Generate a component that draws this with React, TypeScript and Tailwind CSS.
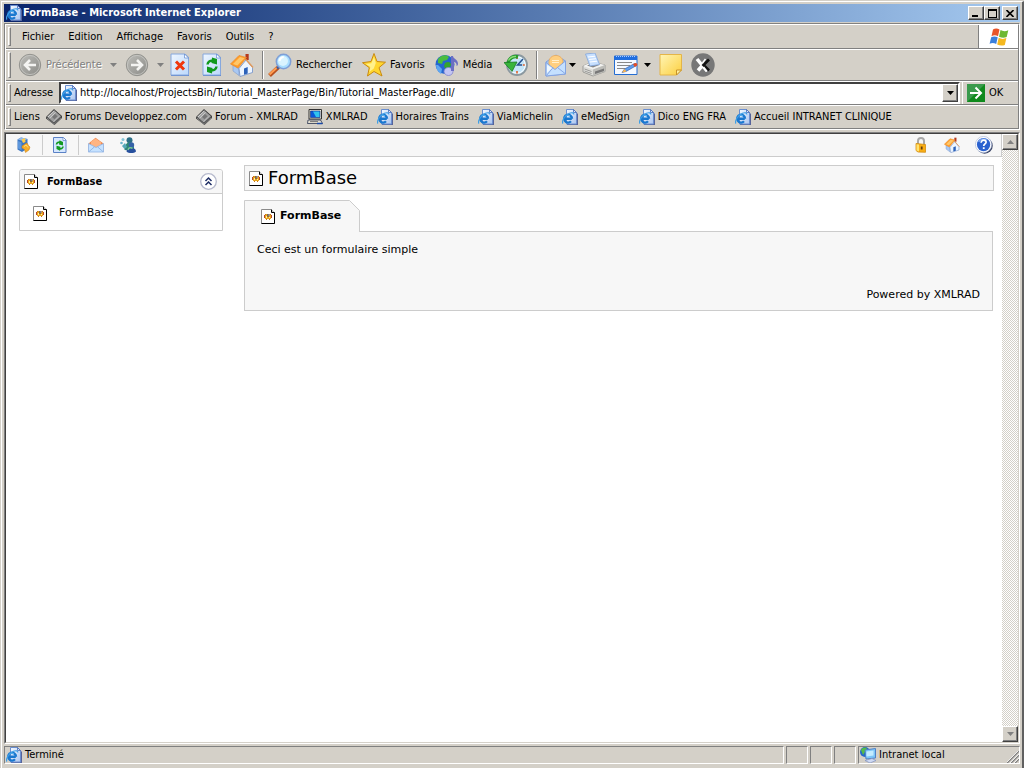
import type { ReactNode } from 'react';

type IconProps = { className?: string };

/* ---------- Icons ---------- */

function IePage({ className = 'size-4' }: IconProps) {
  return (
    <svg viewBox="0 0 16 16" className={className} aria-hidden="true">
      <defs>
        <linearGradient id="iePage" x1="0" y1="0" x2="1" y2="1">
          <stop offset="0" stopColor="#f4f9ff" />
          <stop offset="1" stopColor="#a9c4f0" />
        </linearGradient>
      </defs>
      <path d="M5 2h8l3 3v11H5z" fill="#56639a" />
      <path d="M4.500 .5h7l3 3v11.500h-10z" fill="url(#iePage)" stroke="#6b8fd0" />
      <path d="M11.500 .5v3h3z" fill="#dbe9ff" stroke="#4468b5" strokeWidth=".8" />
      <path d="M9.800 9.800H3.200M10 9.800a3.900 3.900 0 1 0-1 2.500" fill="none" stroke="#1a78cf" strokeWidth="2.400" />
      <path d="M3.500 7.500C4.500 6 6.500 6 8 7" fill="none" stroke="#6cc2f8" strokeWidth=".9" />
      <path d="M1 14.500C-.8 12.500 3 6 7.500 4.200c2.500-.9 4.500-.4 4.300 1.300" fill="none" stroke="#3e9fe6" strokeWidth="1.200" />
    </svg>
  );
}

function Diamond({ className = 'size-4' }: IconProps) {
  return (
    <svg viewBox="0 0 16 16" className={className} aria-hidden="true">
      <path d="M0 8 8 0l8 7v2l-7.500 7L0 9.500z" fill="#3c3c3c" />
      <path d="M1 7.800 8 1.200l7 6L8 13.700z" fill="#9b9b9b" />
      <path d="m2 8 6.300-6M3.500 9.300l6-6" stroke="#d9d9d9" strokeWidth=".9" />
      <path d="m.8 8.800 7.200 6.500 7.200-6.700" fill="none" stroke="#8a8a8a" />
      <path d="m6 8 3-3 2.500 2.300-3 3z" fill="#777" />
      <path d="M7.500 12.500l6-5.500" stroke="#c2c2c2" strokeWidth=".8" />
    </svg>
  );
}

function Computer({ className = 'size-4' }: IconProps) {
  return (
    <svg viewBox="0 0 16 16" className={className} aria-hidden="true">
      <path d="M2 .5h12.500v9.500H2z" fill="#ece9d8" stroke="#333" />
      <path d="M3.500 2h9.500v6.500H3.500z" fill="#0a57d8" stroke="#17317d" strokeWidth=".6" />
      <path d="M6 2.500h6.500V8H9z" fill="#31c3ee" />
      <path d="M1 11h12.500l2 3.500H.5z" fill="#e4e0d2" stroke="#28334f" strokeWidth=".8" />
      <path d="M3 12.600h8" stroke="#777" />
      <path d="M10 14.500h5.500" stroke="#1749ad" strokeWidth="1.500" />
    </svg>
  );
}

function RoundArrow({ back }: { back?: boolean }) {
  return (
    <svg viewBox="0 0 24 24" className="size-6" aria-hidden="true">
      <defs>
        <linearGradient id="round" x1="0" y1="0" x2="1" y2="1">
          <stop offset="0" stopColor="#bdbdb9" />
          <stop offset="1" stopColor="#8b8b87" />
        </linearGradient>
      </defs>
      <circle cx="12" cy="12" r="10.700" fill="url(#round)" stroke="#8e8e8a" strokeWidth=".9" />
      <circle cx="12" cy="12" r="9.600" fill="none" stroke="#c9c9c5" strokeWidth=".8" />
      <path
        d={back ? 'M18 12H7.500M12 7l-5 5 5 5' : 'M6 12h10.500M12 7l5 5-5 5'}
        fill="none"
        stroke="#f4f4f2"
        strokeWidth="2.600"
      />
    </svg>
  );
}

function Sheet({ children }: { children: ReactNode }) {
  return (
    <svg viewBox="0 0 20 24" className="h-6 w-5" aria-hidden="true">
      <defs>
        <linearGradient id="sheet" x1="0" y1="0" x2="1" y2="1">
          <stop offset="0" stopColor="#eef6ff" />
          <stop offset="1" stopColor="#bcd8fb" />
        </linearGradient>
      </defs>
      <path d="M1 1h14.500L19 4.500V23H1z" fill="#5f83c6" />
      <path d="M1 1h14l3.500 3.500V22H1z" fill="url(#sheet)" stroke="#86a8de" />
      <path d="M14.500 1v4h4z" fill="#fff" stroke="#6089cf" strokeWidth=".7" />
      {children}
    </svg>
  );
}

function StopIcon() {
  return (
    <Sheet>
      <path d="m6 8.500 8 8M14 8.500l-8 8" stroke="#f0370f" strokeWidth="3" />
    </Sheet>
  );
}

function RefreshIcon() {
  return (
    <Sheet>
      <path d="M5.500 11.500c.3-3 3-4.500 6-3.500" fill="none" stroke="#119a1d" strokeWidth="2.500" />
      <path d="M10 4.500 15 6v5.500L9.500 10z" fill="#119a1d" />
      <path d="M14.500 13.500c-.3 3-3 4.500-6 3.500" fill="none" stroke="#119a1d" strokeWidth="2.500" />
      <path d="M10 20.500 5 19v-5.500l5.500 1.500z" fill="#119a1d" />
    </Sheet>
  );
}

function HomeIcon({ className = 'size-6' }: IconProps) {
  return (
    <svg viewBox="0 0 24 24" className={className} aria-hidden="true">
      <path d="M15.500 1h3.200v6h-3.200z" fill="#b5391d" />
      <path d="M3 11.500 9 16v6.500L3 18z" fill="#a9c8f2" stroke="#7f9bc9" strokeWidth=".6" />
      <path d="M9 15.500 16 7l6.500 7.500v5L10 23.500z" fill="#edf5ff" stroke="#6f8fc8" strokeWidth=".8" />
      <path d="M14 15.500 17.700 14v6.600L14 21.800z" fill="#2c62b9" />
      <path d="M.5 11 9 2.500l7.500 2L8 15z" fill="#ff9d2a" stroke="#e8882a" strokeWidth=".7" />
      <path d="m3 11 7-7 4.500 1.200-7.200 7.300z" fill="#ffc76a" />
      <path d="m16 6.500 7 8" fill="none" stroke="#e39a5a" strokeWidth="1.300" />
    </svg>
  );
}

function SearchIcon() {
  return (
    <svg viewBox="0 0 24 24" className="size-6" aria-hidden="true">
      <path d="m1.500 22.500 9-8.500" stroke="#b7501e" strokeWidth="4" />
      <path d="m1.500 21.500 8-7.500" stroke="#ff9c50" strokeWidth="2.200" />
      <path d="m9 15.500 3-3" stroke="#425a9b" strokeWidth="2.500" />
      <circle cx="15.500" cy="8.500" r="7.200" fill="#a8deff" stroke="#7f9fd6" strokeWidth="1.500" />
      <circle cx="15" cy="8" r="5" fill="#d9f4ff" />
      <path d="M11.500 8c.4-2.500 2-3.800 4.200-4" fill="none" stroke="#fff" strokeWidth="2" />
    </svg>
  );
}

function StarIcon() {
  return (
    <svg viewBox="0 0 24 24" className="size-6" aria-hidden="true">
      <path d="m12 .5 3 8 8.500.7-6.500 5.500 3 8.300-8-4.500L5.500 23l1.800-8.300L.5 9.700 9 8.500z" fill="#ffd62e" stroke="#c98a12" />
      <path d="m12 4 1.800 6-2 5.500-4.500 3.500 1-5-4.500-3 5.500-.8z" fill="#fff18b" />
    </svg>
  );
}

function MediaIcon() {
  return (
    <svg viewBox="0 0 24 24" className="size-6" aria-hidden="true">
      <circle cx="10" cy="11.500" r="9.500" fill="#2466cf" />
      <path d="M3 6c3-4 8-5 11-2l-2 3-4 1-1 3-4-1z" fill="#4bbd3e" />
      <path d="M10 10c3-2 6-1 6 2l-2 4-3 1-2-4z" fill="#35a42d" />
      <path d="M1 12c0 4 2 7 5 9l1-5-4-4z" fill="#5ea6f1" />
      <ellipse cx="13.500" cy="18.500" rx="4.500" ry="4" fill="#c3c5f2" stroke="#8084cd" strokeWidth=".8" />
      <path d="M16 3h2c0 3 5 3 5 8 0 1-1 2-1.500 2 .5-3-1.500-4-2.500-4v9h-3z" fill="#6b6fc4" />
    </svg>
  );
}

function HistoryIcon() {
  return (
    <svg viewBox="0 0 24 24" className="size-6" aria-hidden="true">
      <circle cx="13" cy="12" r="10" fill="#c5e6f9" stroke="#8b989f" strokeWidth="1.800" />
      <circle cx="13" cy="12" r="8.300" fill="none" stroke="#fff" />
      <path d="M13 4v2M13 18v2.500M20.800 12h-2" stroke="#e0602a" strokeWidth="1.600" />
      <path d="m19 6-5.500 6H18" fill="none" stroke="#27508f" strokeWidth="1.500" />
      <path d="M4 10c1-5 6-7.500 10-6" fill="none" stroke="#259b2d" strokeWidth="3.500" />
      <path d="M0 9.500 13 9 8 18.500z" fill="#38b43b" stroke="#187a24" strokeWidth=".8" />
      <path d="M4.500 7.500C6 4.700 9 3.300 12 3.500" fill="none" stroke="#8add78" strokeWidth="1.300" />
    </svg>
  );
}

function MailIcon() {
  return (
    <svg viewBox="0 0 24 24" className="size-6" aria-hidden="true">
      <path d="M2 9 12 2l9.500 6v13L2 23z" fill="#9fc4ef" stroke="#7f9fe0" />
      <path d="M5 9c0-8 12-9 14-1l-1 6-7 4-6-5z" fill="#ffcf80" stroke="#eda956" strokeWidth=".8" />
      <path d="M8 7.500h7M8 9.500h7" stroke="#fff0ce" />
      <path d="m2 9.500 9 7 10.500-8.500v13L2 23z" fill="#c4e0ff" stroke="#7f9fe0" strokeWidth=".9" />
      <path d="m2.500 22.500 6.500-8M21 20.500l-7.500-6" stroke="#88a8e4" />
      <path d="M3 12v8l5-5z" fill="#eff8ff" />
    </svg>
  );
}

function PrinterIcon() {
  return (
    <svg viewBox="0 0 24 24" className="size-6" aria-hidden="true">
      <path d="m1 13 9-4 13 3v6.500L11 23 1 19z" fill="#dededa" stroke="#8e8e8a" strokeWidth=".8" />
      <path d="m1 13 9-4 13 3-12 4.500z" fill="#f2f2f0" />
      <path d="m5 12.500 6-2.500 7 1.800-7 2.700z" fill="#858585" />
      <path d="M3.500 1 13 0l4.500 11.500L8 13z" fill="#c7e0ff" stroke="#83a6db" strokeWidth=".8" />
      <path d="m6 4 7-.8M7 6.500l7-.8M8 9l7-.8" stroke="#fff" />
      <path d="M11 16.500V23l12-4.500V12z" fill="#bdbdb9" />
      <path d="m13 18.500 9-3v2.500l-9 3z" fill="#777" />
      <path d="m2.500 16 7 2.500M2.500 18l7 2.500" stroke="#9a9a98" />
    </svg>
  );
}

function EditIcon() {
  return (
    <svg viewBox="0 0 24 24" className="size-6" aria-hidden="true">
      <path d="M.5 3h22.500v18.500H.5z" fill="#f5f9ff" stroke="#246dd2" />
      <path d="M.5 3h22.500v4H.5z" fill="#1f6ee0" />
      <path d="M2 3.500h20" stroke="#a9cbff" strokeDasharray="1 1" />
      <path d="M3 9.500h15M3 12.500h13M3 15.500h8" stroke="#888" />
      <path d="m8 19.500 2.500-3.500 10-5.500 2 2-10.500 6z" fill="#5d9ff0" stroke="#2b4f9d" strokeWidth=".6" />
      <path d="m8 19.500 2.500-3.500 2 2.500z" fill="#ffb54a" />
      <path d="m19 11.300 2.200-1.300c2-.4 3 2 1.300 3l-1.800 1z" fill="#e14d28" />
    </svg>
  );
}

function NoteIcon() {
  return (
    <svg viewBox="0 0 24 24" className="size-6" aria-hidden="true">
      <defs>
        <linearGradient id="note" x1="0" y1="0" x2="1" y2="1">
          <stop offset="0" stopColor="#fff5b5" />
          <stop offset="1" stopColor="#fccf3f" />
        </linearGradient>
      </defs>
      <path d="M1 1.500h21.500v15.500l-5 5H1z" fill="url(#note)" stroke="#e4b548" />
      <path d="M17.500 22v-5h5z" fill="#fff0a0" stroke="#c8922a" />
    </svg>
  );
}

function MessengerX() {
  return (
    <svg viewBox="0 0 24 24" className="size-6" aria-hidden="true">
      <circle cx="12" cy="12" r="11.700" fill="#777" />
      <path d="m6 6 10 12M7 17.500 12 12" stroke="#fff" strokeWidth="3.500" />
      <path d="M18 6.500 12.500 12l5.500 5.500" fill="none" stroke="#111" strokeWidth="2.700" />
      <path d="m14.500 6-3 4M16 18.500l-3.500-4.500" stroke="#fff" strokeWidth="1.500" />
    </svg>
  );
}

function WindowsFlag() {
  return (
    <svg viewBox="0 0 20 18" className="h-[18px] w-5" aria-hidden="true">
      <path d="M4 1.500C6 .2 8.500.3 10.500 1.500L9 8.200C7 7 4.500 7 2.500 8.200z" fill="#e8552a" />
      <path d="M11.500 2c2.500 1.500 5 1.500 7.800.2L17.700 9c-2.500 1.200-5 1-7.700-.3z" fill="#6cb832" />
      <path d="M2.200 9.300c2-1.200 4.400-1.200 6.500 0L7.200 16C5 14.700 2.700 14.700.6 15.800z" fill="#3b7fdb" />
      <path d="M9.700 9.800c2.500 1.300 5 1.500 7.700.3l-1.600 6.800c-2.500 1-5 .9-7.600-.4z" fill="#f5b81f" />
    </svg>
  );
}

function GoIcon() {
  return (
    <svg viewBox="0 0 18 18" className="size-[18px]" aria-hidden="true">
      <path d="M0 0h18v18H0z" fill="#0f8a1c" />
      <path d="M0 0h18L0 18z" fill="#3a9a4c" />
      <path d="M3 9h10M8.500 3.500 14 9l-5.500 5.500" fill="none" stroke="#fff" strokeWidth="2" />
    </svg>
  );
}

function PackageIcon() {
  return (
    <svg viewBox="0 0 16 16" className="size-4" aria-hidden="true">
      <path d="M1.500 2.500 5 .5l6.500 1.500v9.500L6 15l-4.500-2.500z" fill="#3b77c4" />
      <path d="M1.500 2.500 5 .5l6.500 1.500-4 2z" fill="#8fb9ec" />
      <path d="m2 4 3.500 1.500V13L2 11.500z" fill="#5e97dc" />
      <path d="M5.500 2.500 9 1l.5 4-2.500 1z" fill="#ffcc4b" />
      <path d="m6 9 3-2 2-1 1.500 2.500 1.500 1.500-1 3-3.500 2.500-1-3L6 11z" fill="#f7ad27" stroke="#c47d16" strokeWidth=".5" />
      <path d="m8 9.500 2-1.500 2 2.500" fill="none" stroke="#ffdf7d" />
    </svg>
  );
}

function SmallRefresh() {
  return (
    <svg viewBox="0 0 16 16" className="size-4" aria-hidden="true">
      <path d="M1.500 .5h10l2.500 2.500v12.500H1.500z" fill="#d6e7ff" stroke="#5b82c6" />
      <path d="M11 .5v3h3" fill="#fff" stroke="#5b82c6" strokeWidth=".7" />
      <path d="M4.500 7.500c.2-2 2-2.500 4-2.200" fill="none" stroke="#129a20" strokeWidth="1.700" />
      <path d="M7.500 3.300 11 5v3.500L7 7.500z" fill="#129a20" />
      <path d="M11 9.500c-.2 2-2 2.500-4 2.200" fill="none" stroke="#129a20" strokeWidth="1.700" />
      <path d="M8 13.700 4.500 12V8.700l4 1z" fill="#129a20" />
    </svg>
  );
}

function LetterIcon() {
  return (
    <svg viewBox="0 0 16 16" className="size-4" aria-hidden="true">
      <path d="M.5 6.500 7.500 .8l8 5.700v8.500H.5z" fill="#f08a50" />
      <path d="M3 4.700 7.500 1.500l5.500 3.700v5H3z" fill="#ffb482" />
      <path d="m.5 6.500 7.500 4 7.500-4v8.500H.5z" fill="#c6e2ff" stroke="#8fb5e8" strokeWidth=".8" />
      <path d="m.8 14.800 5.700-5M15.200 14.800l-5.700-5" stroke="#86abdd" strokeWidth=".8" />
    </svg>
  );
}

function PeopleIcon() {
  return (
    <svg viewBox="0 0 16 16" className="size-4" aria-hidden="true">
      <circle cx="9.500" cy="3.200" r="3" fill="#2c6f86" />
      <path d="M4.500 13c0-10 9.500-10 9.500-2v3z" fill="#2f8578" />
      <circle cx="3" cy="2.500" r="1.500" fill="#88c7d8" />
      <circle cx="1.500" cy="6" r="1.300" fill="#6cb5cc" />
      <path d="m2 9 3-3 2 4-2.500 2z" fill="#57aab8" />
      <circle cx="11.500" cy="8" r="2.700" fill="#3562a8" />
      <path d="M6.500 14.500c0-5 9.500-5 9.500 0-2 2-7.500 2-9.500 0z" fill="#264f9d" />
      <path d="M8 13c.5-2.500 3-3 4.500-1.500" fill="none" stroke="#76c993" strokeWidth="1.500" />
    </svg>
  );
}

function LockIcon() {
  return (
    <svg viewBox="0 0 16 16" className="size-4" aria-hidden="true">
      <path d="M5 8V4c0-4 6-4 6 0v4" fill="none" stroke="#a8a8a8" strokeWidth="2" />
      <path d="M3 6.500 12.500 7.500v7.800l-7.500-.3-2-1.500z" fill="#f9ae15" stroke="#d08b12" strokeWidth=".8" />
      <path d="M3.500 7.200 6 7.600v6.800l-2.500-1z" fill="#ffe372" />
      <path d="M8.700 9.500v3" stroke="#623c10" strokeWidth="1.800" />
    </svg>
  );
}

function HelpIcon() {
  return (
    <svg viewBox="0 0 20 20" className="size-[18px]" aria-hidden="true">
      <circle cx="10.700" cy="10.700" r="9" fill="#3b4566" />
      <circle cx="9.500" cy="9.500" r="9" fill="#fff" stroke="#a4b4d6" strokeWidth=".7" />
      <circle cx="9.500" cy="9.500" r="7.400" fill="#2a61cf" />
      <path d="M4 6.500a6.500 6.500 0 0 1 9-2" fill="none" stroke="#82abf2" strokeWidth="1.500" />
      <path d="M6.800 7.500c0-4 6-3.500 5.500-.4-.3 1.700-2.600 1.800-2.600 4" fill="none" stroke="#fff" strokeWidth="1.900" />
      <path d="M8.700 12.500h2v2h-2z" fill="#fff" />
    </svg>
  );
}

function FormIcon() {
  return (
    <svg viewBox="0 0 14 15" className="h-[15px] w-3.5 shrink-0" aria-hidden="true">
      <path d="M.5 .5H10L13.500 4v10.500H.5z" fill="#fff" stroke="#8a8a8a" />
      <path d="M10.500 .5v3h3v11H.5" fill="none" stroke="#000" />
      <path d="M4 5h6v5H4z" fill="#e8a51e" />
      <path d="M3 6h1v3H3zM10 6h1v3h-1z" fill="#b8452a" />
      <path d="M5 10h1v1H5zM8 10h1v1H8zM4 5h1v1H4zM9 5h1v1H9z" fill="#c9741f" />
      <path d="M5 7h1v2H5zM8 8h1v1H8z" fill="#fff3a0" />
      <path d="M6.500 5h1v3h-1z" fill="#222f66" />
      <path d="M7.500 5h1v2h-1z" fill="#7d8fd0" />
    </svg>
  );
}

function CollapseIcon() {
  return (
    <svg viewBox="0 0 17 17" className="size-[17px]" aria-hidden="true">
      <circle cx="8.500" cy="8.500" r="7.800" fill="#fff" stroke="#b7bacd" strokeWidth="1.300" />
      <path d="m5.500 8 3-3 3 3M5.500 12l3-3 3 3" fill="none" stroke="#1f2e66" strokeWidth="1.500" />
    </svg>
  );
}

function IntranetIcon() {
  return (
    <svg viewBox="0 0 16 16" className="size-4" aria-hidden="true">
      <circle cx="5" cy="5" r="5" fill="#2468c9" />
      <path d="M1 3c2-3 5-3 6-1L5 5 3 8z" fill="#54bd48" />
      <path d="M5 3 15.500 1.500V11L6 12z" fill="#7cc6f8" stroke="#4f80c6" />
      <path d="m6.500 4.500 7-1v5l-7 1z" fill="#c3ecff" />
      <path d="m5 13.500 7-2 4 2-6 2.500z" fill="#cfdaf2" stroke="#8091bf" strokeWidth=".7" />
    </svg>
  );
}

/* ---------- Chrome pieces ---------- */

const raised =
  'flex items-center justify-center bg-[#d4d0c8] border border-t-white border-l-white border-r-[#404040] border-b-[#404040] shadow-[inset_-1px_-1px_0_#808080]';

function Grip() {
  return <div className="my-0.5 mr-[3px] ml-0.5 w-[3px] shrink-0 self-stretch border border-t-white border-l-white border-r-[#808080] border-b-[#808080]" />;
}

function Separator() {
  return <div className="h-7 w-0.5 shrink-0 border-l border-[#808080] bg-white" />;
}

function Caret({ className = 'text-black' }: IconProps) {
  return (
    <svg viewBox="0 0 7 4" className={`h-1 w-[7px] shrink-0 ${className}`} aria-hidden="true">
      <path d="M0 0h7L3.500 4z" fill="currentColor" />
    </svg>
  );
}

function ToolButton({ label, children, className = '' }: { label: string; children: ReactNode; className?: string }) {
  return (
    <button type="button" aria-label={label} className={`flex shrink-0 items-center ${className}`}>
      {children}
    </button>
  );
}

const menus = ['Fichier', 'Edition', 'Affichage', 'Favoris', 'Outils', '?'];

const links = [
  { label: 'Forums Developpez.com', icon: Diamond },
  { label: 'Forum - XMLRAD', icon: Diamond },
  { label: 'XMLRAD', icon: Computer },
  { label: 'Horaires Trains', icon: IePage },
  { label: 'ViaMichelin', icon: IePage },
  { label: 'eMedSign', icon: IePage },
  { label: 'Dico ENG FRA', icon: IePage },
  { label: 'Accueil INTRANET CLINIQUE', icon: IePage },
];

function TitleBar() {
  return (
    <header className="flex h-[18px] items-center bg-gradient-to-r from-[#0a246a] to-[#a6caf0] px-0.5 text-white">
      <IePage />
      <h1 className="ml-px flex-1 font-bold">FormBase - Microsoft Internet Explorer</h1>
      <button type="button" aria-label="Réduire" className={`h-3.5 w-4 ${raised}`}>
        <span className="mt-1.5 mr-0.5 h-0.5 w-1.5 bg-black" />
      </button>
      <button type="button" aria-label="Agrandir" className={`h-3.5 w-4 ${raised}`}>
        <span className="h-[9px] w-[9px] border border-t-2 border-black" />
      </button>
      <button type="button" aria-label="Fermer" className={`ml-0.5 h-3.5 w-4 ${raised}`}>
        <svg viewBox="0 0 8 7" className="h-[7px] w-2" aria-hidden="true">
          <path d="m.5 0 7 7M7.500 0l-7 7" stroke="#000" strokeWidth="1.600" />
        </svg>
      </button>
    </header>
  );
}

function MenuBar() {
  return (
    <div className="flex h-6 border-b border-[#808080]">
      <Grip />
      <nav className="flex flex-1 items-center gap-3.5 pl-2">
        {menus.map((menu) => (
          <button type="button" key={menu}>
            {menu}
          </button>
        ))}
      </nav>
      <div className="flex w-10 items-center justify-center border-l border-[#808080] bg-white">
        <WindowsFlag />
      </div>
    </div>
  );
}

function ToolBar() {
  return (
    <div className="flex h-8 items-center border-t border-b border-t-white border-b-[#808080]">
      <Grip />
      <ToolButton label="Précédente" className="ml-1 gap-1 text-[#808080]">
        <RoundArrow back />
        <span className="w-[60px] text-left [text-shadow:1px_1px_0_#fff]">Précédente</span>
        <Caret className="text-[#808080]" />
      </ToolButton>
      <ToolButton label="Suivante" className="ml-2 gap-2">
        <RoundArrow />
        <Caret className="text-[#808080]" />
      </ToolButton>
      <ToolButton label="Arrêter" className="ml-1.5">
        <StopIcon />
      </ToolButton>
      <ToolButton label="Actualiser" className="ml-3">
        <RefreshIcon />
      </ToolButton>
      <ToolButton label="Démarrage" className="mx-2">
        <HomeIcon />
      </ToolButton>
      <Separator />
      <ToolButton label="Rechercher" className="ml-1 gap-1">
        <SearchIcon />
        Rechercher
      </ToolButton>
      <ToolButton label="Favoris" className="ml-2.5 gap-1">
        <StarIcon />
        Favoris
      </ToolButton>
      <ToolButton label="Média" className="ml-2.5 gap-1">
        <MediaIcon />
        Média
      </ToolButton>
      <ToolButton label="Historique" className="mr-2 ml-3">
        <HistoryIcon />
      </ToolButton>
      <Separator />
      <ToolButton label="Courrier" className="ml-1.5 gap-px">
        <MailIcon />
        <Caret />
      </ToolButton>
      <ToolButton label="Imprimer" className="ml-1.5">
        <PrinterIcon />
      </ToolButton>
      <ToolButton label="Modifier" className="ml-2 gap-1.5">
        <EditIcon />
        <Caret />
      </ToolButton>
      <ToolButton label="Notes" className="ml-2">
        <NoteIcon />
      </ToolButton>
      <ToolButton label="Messenger" className="ml-2">
        <MessengerX />
      </ToolButton>
    </div>
  );
}

function AddressBar() {
  return (
    <div className="flex h-6 items-stretch border-t border-b border-t-white border-b-[#808080]">
      <Grip />
      <label htmlFor="address" className="flex w-[45px] items-center">
        Adresse
      </label>
      <div className="flex flex-1 items-center border-2 border-t-[#404040] border-r-white border-b-white border-l-[#404040] bg-white">
        <IePage />
        <input
          id="address"
          type="text"
          defaultValue="http://localhost/ProjectsBin/Tutorial_MasterPage/Bin/Tutorial_MasterPage.dll/"
          className="flex-1 bg-white pl-[3px] outline-none"
        />
        <button type="button" aria-label="Adresses" className={`w-4 self-stretch ${raised}`}>
          <Caret />
        </button>
      </div>
      <button type="button" className="ml-0.5 flex w-14 items-center gap-1 border-l border-white pl-1">
        <GoIcon />
        OK
      </button>
    </div>
  );
}

function LinksBar() {
  return (
    <div className="flex h-6 items-center border-t border-b border-t-white border-b-[#808080]">
      <Grip />
      <span className="mr-1.5">Liens</span>
      <nav className="flex items-center gap-[9px] whitespace-nowrap">
        {links.map(({ label, icon: Icon }) => (
          <a href="#" key={label} className="flex items-center gap-[3px]">
            <Icon />
            {label}
          </a>
        ))}
      </nav>
    </div>
  );
}

function ScrollBar() {
  return (
    <div className="flex w-4 shrink-0 flex-col justify-between bg-[repeating-conic-gradient(#fff_0_25%,#d4d0c8_0_50%)] bg-[length:2px_2px]">
      <button type="button" aria-label="Défiler vers le haut" className={`h-4 ${raised}`}>
        <Caret className="rotate-180 text-[#808080]" />
      </button>
      <button type="button" aria-label="Défiler vers le bas" className={`h-4 ${raised}`}>
        <Caret className="text-[#808080]" />
      </button>
    </div>
  );
}

function StatusBar() {
  const cell = 'flex items-center border border-t-[#808080] border-l-[#808080] border-r-white border-b-white';
  return (
    <footer className="mt-0.5 flex h-[18px] gap-0.5">
      <div className={`flex-1 gap-[3px] pl-px ${cell}`}>
        <IePage />
        Terminé
      </div>
      <div className={`w-[22px] ${cell}`} />
      <div className={`w-[22px] ${cell}`} />
      <div className={`w-[22px] ${cell}`} />
      <div className={`w-[162px] gap-[3px] pl-px ${cell}`}>
        <IntranetIcon />
        <span className="flex-1">Intranet local</span>
        <svg viewBox="0 0 12 12" className="size-3 self-end" aria-hidden="true">
          <path d="M0 12 12 0M4 12l8-8M8 12l4-4" stroke="#808080" strokeWidth="1.500" />
          <path d="M-1 12 12-1M3 12l9-9M7 12l5-5" stroke="#fff" strokeWidth=".8" />
        </svg>
      </div>
    </footer>
  );
}

/* ---------- Page shown in the browser ---------- */

function PageToolBar() {
  return (
    <div className="flex h-[23px] items-center border-r border-b border-[#ccc] bg-[#f7f7f7] pr-2 pl-2.5">
      <button type="button" aria-label="Projet">
        <PackageIcon />
      </button>
      <span className="mr-[9px] ml-2.5 h-5 w-px bg-[#ccc]" />
      <button type="button" aria-label="Actualiser">
        <SmallRefresh />
      </button>
      <span className="mr-[9px] ml-2.5 h-5 w-px bg-[#ccc]" />
      <button type="button" aria-label="Courrier">
        <LetterIcon />
      </button>
      <button type="button" aria-label="Contacts" className="ml-4">
        <PeopleIcon />
      </button>
      <div className="ml-auto flex items-center gap-[15px]">
        <button type="button" aria-label="Sécurité">
          <LockIcon />
        </button>
        <button type="button" aria-label="Accueil">
          <HomeIcon className="size-4" />
        </button>
        <button type="button" aria-label="Aide">
          <HelpIcon />
        </button>
      </div>
    </div>
  );
}

function SidePanel() {
  return (
    <aside className="mt-1 w-[204px] shrink-0 self-start rounded-t-[3px] border border-[#ccc]">
      <div className="flex h-6 items-center rounded-t-[2px] border-b border-[#ccc] bg-[#f7f7f7] pr-[5px] pl-1">
        <FormIcon />
        <h2 className="ml-[9px] flex-1 font-bold">FormBase</h2>
        <button type="button" aria-label="Replier">
          <CollapseIcon />
        </button>
      </div>
      <a href="#" className="flex h-9 items-center gap-3 pt-0.5 pl-[13px] font-['DejaVu_Sans',sans-serif]">
        <FormIcon />
        FormBase
      </a>
    </aside>
  );
}

function Content() {
  return (
    <main className="min-w-0 flex-1 font-['DejaVu_Sans',sans-serif]">
      <div className="flex h-[26px] items-center gap-[5px] border border-[#ccc] bg-[#f7f7f7] pl-1">
        <FormIcon />
        <h2 className="text-[18px] leading-6">FormBase</h2>
      </div>
      <div className="mt-[9px] mr-px">
        <button type="button" className="relative z-10 -mb-px flex h-8 w-[116px] items-center gap-[5px] pl-[17px] font-bold">
          <svg viewBox="0 0 116 32" className="absolute inset-0 -z-10 h-8 w-[116px]" aria-hidden="true">
            <path d="M.5 32V.5h105l10 10V32" fill="#f7f7f7" stroke="#ccc" />
          </svg>
          <FormIcon />
          FormBase
        </button>
        <section className="flex h-20 flex-col justify-between border border-[#ccc] bg-[#f7f7f7] px-3 pt-[11px] pb-2">
          <p>Ceci est un formulaire simple</p>
          <p className="text-right">Powered by XMLRAD</p>
        </section>
      </div>
    </main>
  );
}

function App() {
  return (
    <div className="flex h-screen flex-col overflow-hidden border-t border-l border-[#d4d0c8] bg-[#d4d0c8] font-['DejaVu_Sans_Condensed','DejaVu_Sans',sans-serif] text-[11px] leading-[14px] text-black">
      <div className="flex min-h-0 flex-1 flex-col border-t border-r-2 border-l border-t-white border-r-[#606060] border-l-white px-0.5 pt-0.5 pb-1">
        <TitleBar />
        <div className="mt-px border border-t-[#808080] border-r-white border-b-white border-l-[#808080]">
          <div className="border border-t-white border-r-[#808080] border-b-0 border-l-white">
            <MenuBar />
            <ToolBar />
            <AddressBar />
            <LinksBar />
          </div>
        </div>
        <div className="mt-0.5 flex min-h-0 flex-1 border border-t-[#808080] border-r-white border-b-white border-l-[#808080]">
          <div className="flex min-w-0 flex-1 border border-t-[#404040] border-r-[#d4d0c8] border-b-[#d4d0c8] border-l-[#404040] bg-white">
            <div className="min-w-0 flex-1">
              <PageToolBar />
              <div className="flex gap-[21px] pt-2 pr-2 pl-[13px]">
                <SidePanel />
                <Content />
              </div>
            </div>
            <ScrollBar />
          </div>
        </div>
        <StatusBar />
      </div>
    </div>
  );
}

export default App;
